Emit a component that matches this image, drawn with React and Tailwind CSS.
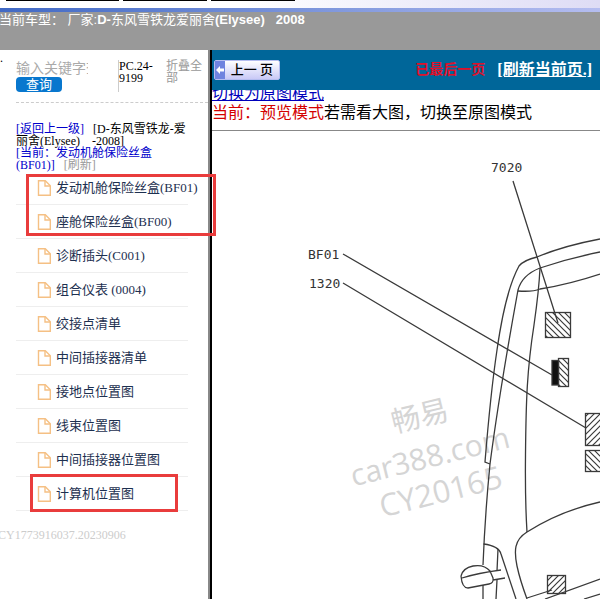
const items = [
  '发动机舱保险丝盒(BF01)',
  '座舱保险丝盒(BF00)',
  '诊断插头(C001)',
  '组合仪表 (0004)',
  '绞接点清单',
  '中间插接器清单',
  '接地点位置图',
  '线束位置图',
  '中间插接器位置图',
  '计算机位置图',
];

function FileIcon() {
  return (
    <svg className="h-4 w-4 shrink-0" viewBox="0 0 16 16" fill="none" stroke="#f5c084" strokeWidth="1.4" aria-hidden="true">
      <path d="M2.500 .8h6.8L14.300 5.800V15.200H2.500z" />
      <path d="M9 1v5h5" />
    </svg>
  );
}

function Header() {
  return (
    <header className="h-[50px] shrink-0 overflow-hidden bg-[#999999]">
      <div className="flex h-2 gap-1 bg-gradient-to-r from-white via-white via-40% to-[#dedcf5] pl-1.5">
        <span className="h-px w-[113px] bg-black" />
        <span className="h-px w-[84px] bg-black" />
        <span className="h-px w-[84px] bg-black" />
      </div>
      <div className="h-1 bg-gradient-to-r from-[#4169c4] to-[#b5bdf0]" />
      <h1 className="-ml-px whitespace-pre font-['Liberation_Sans','Noto_Sans_CJK_SC',sans-serif] text-[13px] leading-4 text-white">
        当前车型： 厂家:<b>D-</b>东风雪铁龙爱丽舍<b>(Elysee)</b>{'   '}<b>2008</b>
      </h1>
    </header>
  );
}

function Sidebar() {
  return (
    <aside className="relative w-[208px] shrink-0 pl-4">
      <span className="absolute left-0 top-0 text-xs leading-4">.</span>
      <div className="flex h-[53px] border-b border-dashed border-[#cccccc] pt-2.5 text-xs leading-3">
        <form className="flex w-[102px] flex-col items-start" onSubmit={(e) => e.preventDefault()}>
          <input
            aria-label="输入关键字查询"
            placeholder="输入关键字查询"
            className="h-[17px] w-[72px] text-sm leading-[17px] outline-none placeholder:text-[#aaaaaa]"
          />
          <button className="h-[15px] w-[46px] rounded-sm bg-[#0877ce] text-[13px] leading-[15px] text-white">查询</button>
        </form>
        <div className="h-8 w-12 border-l border-[#cccccc]">
          PC.24-
          <br />
          9199
        </div>
        <a href="#fold" className="w-[38px] text-[#999999]">
          折叠全部
        </a>
      </div>
      <div className="mt-5 h-12 whitespace-pre text-xs leading-3 text-black">
        <a href="#back" className="text-[#0000cc]">[返回上一级]</a>{'   [D-东风雪铁龙-爱\n丽舍(Elysee)    -2008]\n'}
        <a href="#current" className="text-[#0000cc]">{'[当前：发动机舱保险丝盒\n(BF01)]'}</a>{'   '}
        <a href="#refresh" className="text-[#999999]">[刷新]</a>
      </div>
      <div className="relative">
        <ul className="mr-5">
          {items.map((t) => (
            <li key={t} className="h-[34px] border-b border-[#eeeeee]">
              <a href="#item" className="flex h-full items-center gap-1 whitespace-nowrap pl-5 text-[13px] text-[#1d3050]">
                <FileIcon />
                {t}
              </a>
            </li>
          ))}
        </ul>
        <span className="pointer-events-none absolute left-2.5 top-[3px] z-10 h-[62px] w-[190px] border-3 border-[#e93c3c]" />
        <span className="pointer-events-none absolute -bottom-px left-3.5 z-10 h-[38px] w-[148px] border-3 border-[#e93c3c]" />
      </div>
      <p className="-ml-[18px] mt-4 text-xs leading-4 text-[#cccccc]">CY1773916037.20230906</p>
    </aside>
  );
}

function Diagram() {
  return (
    <svg
      className="block h-[468px] w-[388px] shrink-0"
      viewBox="212 131 388 468"
      fill="none"
      stroke="#3a3a3a"
      strokeWidth="1.3"
      role="img"
      aria-label="发动机舱保险丝盒位置图"
    >
      <defs>
        <pattern id="down" width="6" height="6" patternUnits="userSpaceOnUse">
          <path d="M-1 -1L7 7M-1 5L1 7M5 -1L7 1" strokeWidth="1.2" />
        </pattern>
        <pattern id="up" width="6" height="6" patternUnits="userSpaceOnUse">
          <path d="M-1 7L7 -1M-1 1L1 -1M5 7L7 5" strokeWidth="1.2" />
        </pattern>
      </defs>
      <g
        stroke="none"
        fill="#d5d5d5"
        textAnchor="middle"
        className="font-['Open_Sans','Noto_Sans_CJK_SC',sans-serif]"
        transform="rotate(-14 431 461)"
      >
        <text x="431" y="425" fontSize="29">畅易</text>
        <text x="431" y="467" fontSize="30">car388.com</text>
        <text x="433" y="504" fontSize="31">CY20165</text>
      </g>
      <g stroke="none" fill="#333333" fontSize="13" className="font-['DejaVu_Sans_Mono',monospace]">
        <text x="491" y="172">7020</text>
        <text x="308" y="259">BF01</text>
        <text x="309" y="288">1320</text>
      </g>
      <path d="M513 181L558 323M343 254L552 375M343 283L586 428" />
      <path d="M600 239Q563 246 537 257Q524 260 519 266C508 286 502 315 497 350C491 390 488 425 485 462L490 464" />
      <path d="M600 252Q570 258 540 268Q522 275 518 290C508 345 499 395 490 464Q485 515 483 565" />
      <path d="M518 291Q533 292 540 289Q570 284 600 274" />
      <path d="M540 268Q539 290 534 325C527 370 526 400 525.500 455Q525 500 527 532" />
      <path d="M600 502Q560 511 527 532C514 540 514 551 517 566Q520 580 527 599" />
      <path d="M483.500 544Q499 546 501 554Q507 572 516 599" />
      <path d="M483 585V599M498 549L497 571M497 580L496 599" />
      <path d="M461 576Q463 568 473 566Q484 564 490 571L493 578Q494 583 489 584L468 588Q462 588 461 576M462 578Q478 573 501 570M493 580L505 578" />
      <path d="M527 598L552 590M545 599L600 579M584 599L600 594" />
      <rect x="545.500" y="312.500" width="25" height="25" fill="url(#down)" />
      <rect x="558.500" y="358.500" width="10" height="28" fill="url(#down)" />
      <rect x="552" y="360.500" width="6.500" height="24.500" fill="#111111" />
      <rect x="585.500" y="413.500" width="30" height="32" fill="url(#up)" />
      <rect x="585.500" y="450.500" width="30" height="21" fill="url(#down)" />
      <rect x="547.500" y="575.500" width="18" height="18" fill="url(#up)" />
    </svg>
  );
}

export default function App() {
  return (
    <div className="flex h-screen flex-col overflow-hidden bg-white font-['Liberation_Serif','Noto_Sans_CJK_SC',serif]">
      <Header />
      <div className="flex min-h-0 flex-1">
        <Sidebar />
        <div className="w-1 shrink-0 border-l-2 border-[#888888] bg-black" />
        <main className="flex min-w-0 flex-1 flex-col overflow-hidden">
          <nav className="flex h-10 shrink-0 items-center bg-[#006699] pl-0.5 pr-2">
            <button className="flex h-5 w-[66px] items-stretch rounded-xs border border-[#b5bdf0] bg-gradient-to-b from-white to-[#c9c9f6] text-xs text-black">
              <svg className="h-full w-2.5 bg-[#6f83df]" viewBox="0 0 10 18" fill="white" aria-hidden="true">
                <path d="M1 9l4-4v2.500h4v3H5V13z" />
              </svg>
              <span className="flex-1 whitespace-nowrap text-[13px] font-medium leading-[18px]">上一 页</span>
            </button>
            <span className="ml-auto whitespace-nowrap text-sm font-bold text-[#e0102a]">已最后一页</span>
            <a href="#reload" className="ml-3 whitespace-nowrap text-base font-bold text-white underline">
              [刷新当前页.]
            </a>
          </nav>
          <div className="flex h-[41px] shrink-0 flex-col justify-end overflow-hidden border-b border-[#888888] pb-2 text-base leading-[19px]">
            <a href="#original" className="whitespace-nowrap text-[#0000bb] underline">切换为原图模式</a>
            <p className="whitespace-nowrap text-black">
              <span className="text-[#d40000]">当前：预览模式</span>若需看大图，切换至原图模式
            </p>
          </div>
          <Diagram />
        </main>
      </div>
    </div>
  );
}
